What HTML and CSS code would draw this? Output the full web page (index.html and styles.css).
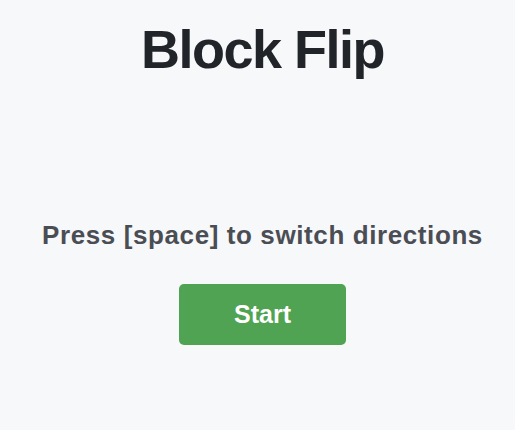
FILE: index.html
```html
<!DOCTYPE html>
<html lang="en">
<head>
    <meta charset="UTF-8">
    <meta name="viewport" content="width=device-width, initial-scale=1.0">
    <title>Block Flip</title>
    <link rel="stylesheet" href="styles.css">
</head>
<body>
<div class="menu">
    <h1>Block Flip</h1>
    <p class="hint">Press [space] to switch directions</p>
    <button id="btnStart">Start</button>
</div>
</body>
</html>
```

FILE: styles.css
```css
body {
    margin: 0;
    font-family: "Liberation Sans", Arial, sans-serif;
    background-color: #f7f8fa;
    color: #212428;
    text-align: center;
}

.menu {
    display: flex;
    flex-direction: column;
    align-items: center;
    padding: 18px 0 0 10px;
}

h1 {
    margin: 0;
    font-size: 54px;
    line-height: 62px;
    letter-spacing: -1.5px;
}

.hint {
    margin: 140px 0 0 0;
    font-size: 26px;
    line-height: 30px;
    font-weight: bold;
    color: #4a4e54;
    letter-spacing: 0.6px;
}

button {
    margin-top: 34px;
    width: 167px;
    height: 61px;
    border: none;
    border-radius: 5px;
    background-color: #4fa352;
    color: white;
    font-family: inherit;
    font-size: 25px;
    font-weight: bold;
    cursor: pointer;
}
```
